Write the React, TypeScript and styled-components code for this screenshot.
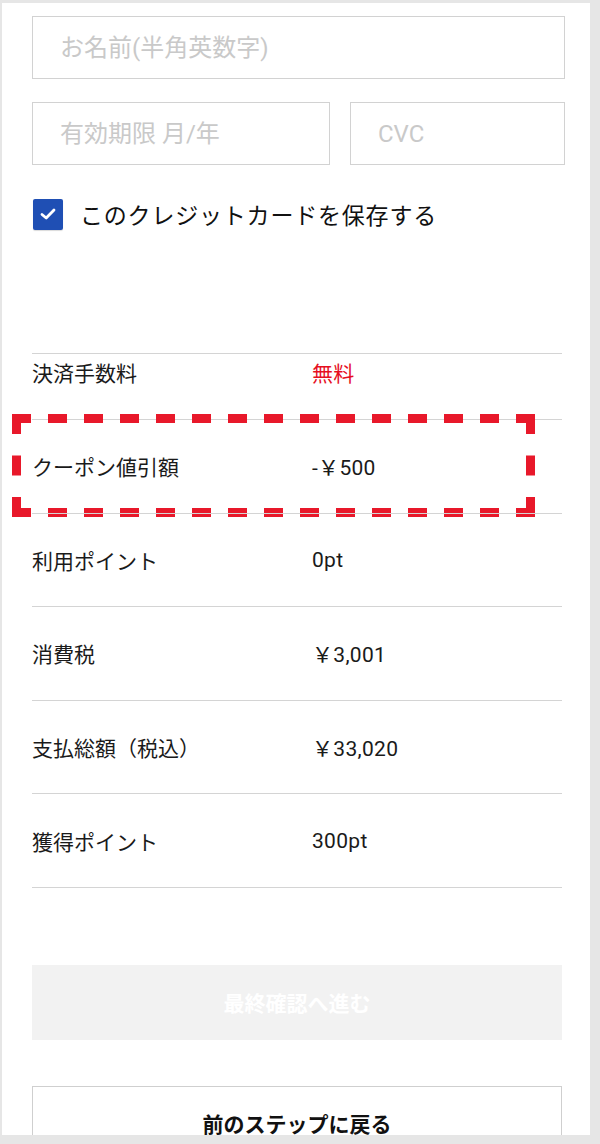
import React from "react";
import styled, { createGlobalStyle } from "styled-components";

const GlobalStyle = createGlobalStyle`
	body {
		margin: 0;
		background: #e6e6e6;
		font-family: Roboto, "Noto Sans CJK JP", sans-serif;
		color: #1a1a1a;
	}
`;

const Panel = styled.div`
	box-sizing: border-box;
	margin: 3px 10px 0 2px;
	height: 1132px;
	overflow: hidden;
	background: #ffffff;
	padding: 13px 28px 0 30px;
`;

const Field = styled.input<{ $width?: number }>`
	box-sizing: border-box;
	display: block;
	width: ${(p) => (p.$width ? `${p.$width}px` : "calc(100% + 3px)")};
	height: 63px;
	margin: 0;
	padding: 0 0 0 27px;
	border: 1.5px solid #d2d2d2;
	border-radius: 0;
	background: #fff;
	font-family: Roboto, "Noto Sans CJK JP", sans-serif;
	font-size: 24px;
	outline: none;
	&::placeholder {
		color: #c9c9c9;
	}
`;

const FieldRow = styled.div`
	display: flex;
	gap: 20px;
	margin-top: 23px;
	margin-right: -3px;
`;

const CheckRow = styled.label`
	display: flex;
	align-items: center;
	gap: 17px;
	margin-top: 32px;
	padding-left: 1px;
	font-family: "Noto Sans CJK JP", sans-serif;
	font-size: 23px;
	letter-spacing: 0.8px;
	color: #111;
`;

const CheckBox = styled.span`
	display: flex;
	align-items: center;
	justify-content: center;
	width: 30px;
	height: 31px;
	border-radius: 2px;
	background: #1f4fb4;
	box-shadow: 0 1px 1px rgba(0, 0, 0, 0.15);
`;

const Summary = styled.div`
	margin-top: 122px;
	border-bottom: 1.5px solid #d4d4d4;
`;

const Row = styled.div<{ $compact?: boolean }>`
	position: relative;
	box-sizing: border-box;
	display: flex;
	align-items: ${(p) => (p.$compact ? "flex-start" : "center")};
	height: ${(p) => (p.$compact ? "66px" : "93.6px")};
	padding-top: ${(p) => (p.$compact ? "3px" : "0")};
	border-top: 1.5px solid #d4d4d4;
	font-size: 21px;
`;

const Label = styled.div`
	width: 280px;
	flex-shrink: 0;
	font-family: "Noto Sans CJK JP", sans-serif;
	color: #1a1a1a;
`;

const Value = styled.div<{ $red?: boolean }>`
	color: ${(p) => (p.$red ? "#e60f1e" : "#1a1a1a")};
	letter-spacing: 0.3px;
`;

const Highlight = styled.svg`
	position: absolute;
	left: -20px;
	top: -6px;
	overflow: visible;
	pointer-events: none;
`;

const Button = styled.div<{ $primary?: boolean }>`
	box-sizing: border-box;
	display: flex;
	align-items: center;
	justify-content: center;
	height: 75px;
	margin-top: ${(p) => (p.$primary ? "77px" : "46px")};
	background: ${(p) => (p.$primary ? "#f2f2f2" : "#ffffff")};
	border: ${(p) => (p.$primary ? "none" : "1.5px solid #cfcfcf")};
	color: ${(p) => (p.$primary ? "#ffffff" : "#111111")};
	font-family: "Noto Sans CJK JP", sans-serif;
	font-size: 21px;
	font-weight: 700;
`;

const dash = (length: number, d: number, g: number) => {
	const n = Math.max(2, Math.round((length + g) / (d + g)));
	const gap = (length - n * d) / (n - 1);
	return `${d} ${gap}`;
};

const DashedFrame = ({ w, h }: { w: number; h: number }) => {
	const s = 9;
	const half = s / 2;
	const hd = dash(w, 19, 18);
	const vd = dash(h, 20, 20);
	return (
		<Highlight width={w} height={h} viewBox={`0 0 ${w} ${h}`}>
			<g stroke="#e8182a" strokeWidth={s} fill="none">
				<line x1={0} y1={half} x2={w} y2={half} strokeDasharray={hd} />
				<line x1={0} y1={h - half} x2={w} y2={h - half} strokeDasharray={hd} />
				<line x1={half} y1={0} x2={half} y2={h} strokeDasharray={vd} />
				<line x1={w - half} y1={0} x2={w - half} y2={h} strokeDasharray={vd} />
			</g>
		</Highlight>
	);
};

const rows = [
	{ label: "利用ポイント", value: "0pt" },
	{ label: "消費税", value: "￥3,001" },
	{ label: "支払総額（税込）", value: "￥33,020" },
	{ label: "獲得ポイント", value: "300pt" },
];

export default function App() {
	return (
		<>
			<GlobalStyle />
			<Panel>
				<Field placeholder="お名前(半角英数字)" />
				<FieldRow>
					<Field $width={298} placeholder="有効期限 月/年" />
					<Field $width={215} placeholder="CVC" />
				</FieldRow>
				<CheckRow>
					<CheckBox>
						<svg width="16" height="14" viewBox="0 0 16 14">
							<polyline
								points="2,7.5 6.2,11 14,3"
								fill="none"
								stroke="#fff"
								strokeWidth="2.8"
								strokeLinecap="round"
								strokeLinejoin="round"
							/>
						</svg>
					</CheckBox>
					このクレジットカードを保存する
				</CheckRow>

				<Summary>
					<Row $compact>
						<Label>決済手数料</Label>
						<Value $red>無料</Value>
					</Row>
					<Row>
						<Label>クーポン値引額</Label>
						<Value>-￥500</Value>
						<DashedFrame w={523} h={103} />
					</Row>
					{rows.map((r) => (
						<Row key={r.label}>
							<Label>{r.label}</Label>
							<Value>{r.value}</Value>
						</Row>
					))}
				</Summary>

				<Button $primary>最終確認へ進む</Button>
				<Button>前のステップに戻る</Button>
			</Panel>
		</>
	);
}
